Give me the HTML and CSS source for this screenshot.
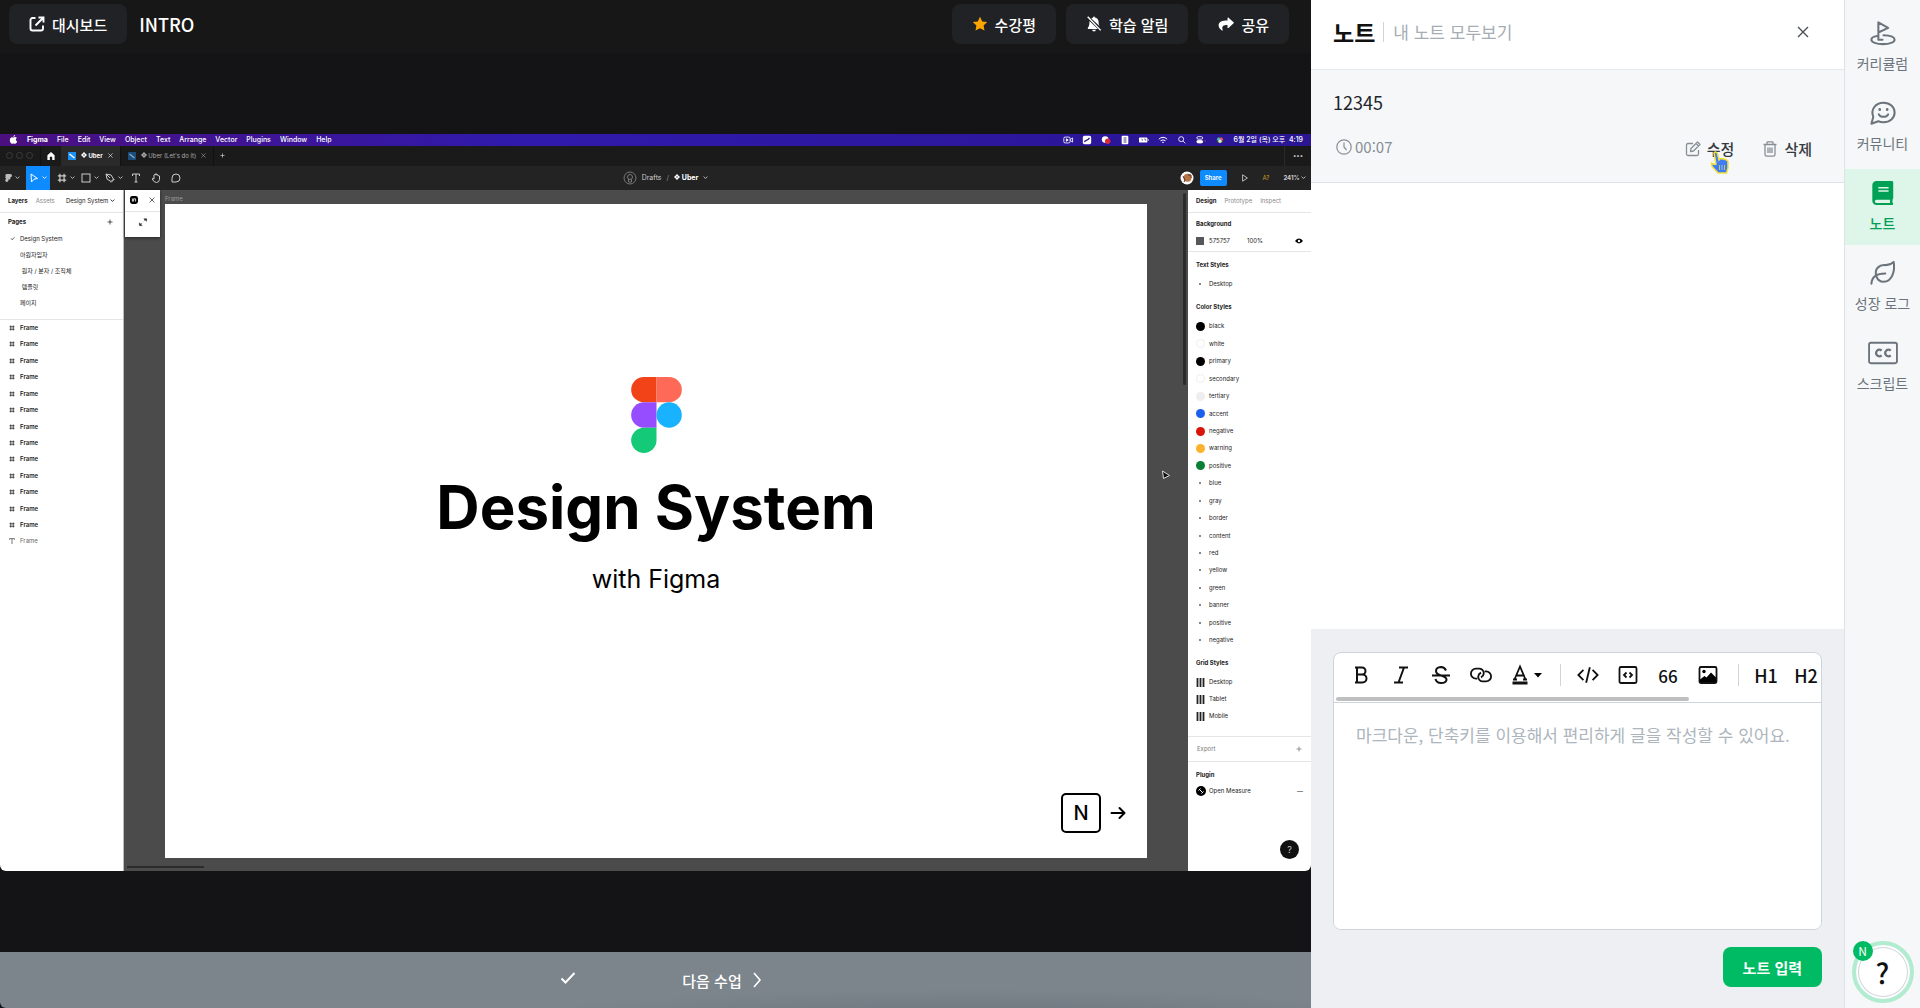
FILE: index.html
```html
<!DOCTYPE html>
<html lang="ko">
<head>
  <meta charset="UTF-8">
  <meta name="viewport" content="width=device-width, initial-scale=1.0">
  <title>INTRO - 노트</title>
  <link rel="stylesheet" href="styles.css">
</head>
<body>
  <svg class="sprite" aria-hidden="true">
    <symbol id="i-chev" viewBox="0 0 8 8"><path d="M1 2.5l3 3 3-3" fill="none" stroke="currentColor" stroke-width="1.4"/></symbol>
    <symbol id="i-grid" viewBox="0 0 12 12"><path d="M3.5 1v10M8.5 1v10M1 3.500h10M1 8.500h10" fill="none" stroke="currentColor" stroke-width="1.500"/></symbol>
    <symbol id="i-close" viewBox="0 0 12 12"><path d="M1 1l10 10M11 1L1 11" fill="none" stroke="currentColor" stroke-width="1.400"/></symbol>
    <symbol id="i-plus" viewBox="0 0 12 12"><path d="M6 1v10M1 6h10" fill="none" stroke="currentColor" stroke-width="1.500"/></symbol>
    <symbol id="i-diamond" viewBox="0 0 12 12"><path d="M6 0l6 6-6 6-6-6z" fill="currentColor"/><path d="M3 3l6 6M9 3L3 9" stroke="#2a2a2a" stroke-width=".8"/></symbol>
    <symbol id="i-cols" viewBox="0 0 9 9"><path d="M1.500 0v9M4.500 0v9M7.500 0v9" fill="none" stroke="currentColor" stroke-width="1.800"/></symbol>
  </svg>

  <div class="app">
    <main class="player">
      <header class="player-header">
        <button class="dark-btn" type="button">
          <svg class="icon-16" viewBox="0 0 16 16" fill="none" stroke="currentColor" stroke-width="1.9"><path d="M6.500 2H3.500A2 2 0 0 0 1.500 4v8.500a2 2 0 0 0 2 2H12a2 2 0 0 0 2-2V9.500M9.500 1.500h5v5M14 2L6.500 9.500"/></svg>
          대시보드
        </button>
        <h1 class="lesson-title">INTRO</h1>
        <div class="header-actions">
          <button class="dark-btn" type="button">
            <svg class="icon-16" viewBox="0 0 16 16" fill="#ffa500"><path d="M8 .8l2.200 4.600 5 .7-3.600 3.500.9 5L8 12.200l-4.500 2.400.9-5L.8 6.100l5-.7z"/></svg>
            수강평
          </button>
          <button class="dark-btn" type="button">
            <svg class="icon-16" viewBox="0 0 16 16" fill="currentColor"><path d="M1.200 1.200l1-.9 13 13.600-1 .9zM8 .6c.6 0 .9.400.9.900 2.200.5 3.700 2.200 3.700 4.600 0 1.900.3 2.900.9 3.800L5.300 2.500c.5-.5 1.100-.8 1.800-1 0-.5.3-.9.900-.9zM3.500 5l8.300 8H2.500c-.7 0-1-.8-.6-1.300C2.900 10.500 3.400 9.300 3.500 5zM6.200 13.800h3.600c0 1-.8 1.700-1.800 1.700s-1.800-.7-1.800-1.700z"/></svg>
            학습 알림
          </button>
          <button class="dark-btn" type="button">
            <svg class="icon-16" viewBox="0 0 16 16" fill="currentColor"><path d="M9.500 2.200c0-.6.600-.9 1-.5l5.100 4.600c.3.300.3.700 0 1l-5.100 4.600c-.4.400-1 .1-1-.5V9c-4.300 0-6 1-4.800 5.100.1.500-.4.800-.8.500C2.500 13.600.6 11.900.6 9.600c0-4 3.500-5 8.900-5.100z"/></svg>
            공유
          </button>
        </div>
      </header>

      <div class="stage">
        <section class="video" aria-label="강의 영상">
          <div class="mac-bar">
            <svg class="icon-9" viewBox="0 0 12 14" fill="#fff"><path d="M8.500 0c.1 1.500-1.200 3-2.600 3C5.700 1.500 7 .1 8.500 0zM6 4c.6 0 1.400-.7 2.600-.7 1 0 2 .5 2.600 1.400-2.300 1.400-1.900 4.500.5 5.400C11 12 10 13.700 8.700 13.700c-1 0-1.300-.6-2.500-.6s-1.600.6-2.500.6C2.200 13.700.3 10.700.3 8 .3 5 2 3.400 3.800 3.400 4.800 3.400 5.500 4 6 4z"/></svg>
            <b>Figma</b><span>File</span><span>Edit</span><span>View</span><span>Object</span><span>Text</span><span>Arrange</span><span>Vector</span><span>Plugins</span><span>Window</span><span>Help</span>
            <div class="mac-status">
              <svg class="icon-10" viewBox="0 0 12 10" fill="none" stroke="#fff"><rect x="1" y="1.500" width="7.500" height="7" rx="1.500"/><path d="M8.500 4.500l3-2v5l-3-2"/><path d="M4 3.500v3l2.300-1.500z" fill="#fff"/></svg>
              <svg class="icon-10" viewBox="0 0 12 10"><rect x="1" y="0" width="10" height="10" rx="2" fill="#fff"/><path d="M3 7.500C4 4 6 7 9 2.500" stroke="#231489" stroke-width="1.500" fill="none"/></svg>
              <svg class="icon-10" viewBox="0 0 12 10"><circle cx="5" cy="4.500" r="4" fill="#fff"/><circle cx="8" cy="6.500" r="3.200" fill="#d92b3a"/></svg>
              <svg class="icon-10" viewBox="0 0 12 10"><rect x="2" y="0" width="8" height="10" rx="1" fill="#fff"/><path d="M4 2.500h4M4 5h4M4 7.500h4M6 2v6" stroke="#6f62b0" fill="none"/></svg>
              <svg class="icon-10" viewBox="0 0 12 10"><rect x="0" y="2" width="10" height="6" rx="1" fill="#fff"/><path d="M3 4h1v2M6 4h2v2" stroke="#6f62b0" fill="none"/><path d="M11 4v2" stroke="#fff"/></svg>
              <svg class="icon-10" viewBox="0 0 12 10" fill="none" stroke="#fff" stroke-width="1.200"><path d="M1 4q5-4.500 10 0M3 6q3-2.500 6 0M5 8q1-1 2 0"/></svg>
              <svg class="icon-10" viewBox="0 0 12 10" fill="none" stroke="#fff"><circle cx="5" cy="4" r="3"/><path d="M7.300 6.300L10 9"/></svg>
              <svg class="icon-10" viewBox="0 0 12 10" fill="none" stroke="#fff"><rect x="1" y="1" width="7" height="3" rx="1.500"/><rect x="1" y="5.500" width="7" height="3" rx="1.500" fill="#fff"/><circle cx="11" cy="6" r=".7" fill="#f54" stroke="none"/></svg>
              <svg class="icon-10" viewBox="0 0 12 10"><circle cx="6" cy="5" r="4" fill="#443"/><circle cx="4.500" cy="4" r="2" fill="#3bb8d8"/><circle cx="7.500" cy="4" r="2" fill="#e8507a"/><circle cx="6" cy="6.500" r="2" fill="#c9f0dc"/></svg>
              <span>6월 2일 (목) 오후&nbsp; 4:19</span>
            </div>
          </div>

          <div class="tab-bar">
            <div class="lights"><i></i><i></i><i></i></div>
            <div class="home-tab">
              <svg class="icon-8" viewBox="0 0 10 10" fill="#fff"><path d="M5 0l4.500 4v6H6.500V6h-3v4H.500V4z"/></svg>
            </div>
            <div class="file-tab active">
              <svg class="icon-8" viewBox="0 0 8 8"><rect width="8" height="8" fill="#1c8ff2"/><path d="M1.500 2L6.500 6" stroke="#fff" stroke-width="1.500"/></svg>
              <b><svg class="icon-6"><use href="#i-diamond"/></svg> Uber</b>
              <svg class="icon-5"><use href="#i-close"/></svg>
            </div>
            <div class="file-tab">
              <svg class="icon-8" viewBox="0 0 8 8"><rect width="8" height="8" fill="#1b4d7c"/><path d="M1.500 2L6.500 6" stroke="#8ab" stroke-width="1.500"/></svg>
              <span><svg class="icon-6"><use href="#i-diamond"/></svg> Uber (Let's do it)</span>
              <svg class="icon-5"><use href="#i-close"/></svg>
            </div>
            <div class="new-tab"><svg class="icon-5"><use href="#i-plus"/></svg></div>
            <div class="tab-more">•••</div>
          </div>

          <div class="tool-bar">
            <div class="tools">
              <div class="tool"><svg class="icon-8" viewBox="0 0 8 10" fill="#bbb"><path d="M2.500 0H7a2 2 0 0 1 0 4v2a1.500 1.500 0 0 1-2.500.5V8a2 2 0 1 1-2.500-2A2 2 0 0 1 1 3 2 2 0 0 1 2.500 0z"/></svg><svg class="icon-5"><use href="#i-chev"/></svg></div>
              <div class="tool on"><svg class="icon-10" viewBox="0 0 10 10" fill="none" stroke="#fff"><path d="M2 1l6.500 4.500-3.500.7L2.500 9z"/></svg><svg class="icon-5"><use href="#i-chev"/></svg></div>
              <div class="tool"><svg class="icon-10"><use href="#i-grid"/></svg><svg class="icon-5"><use href="#i-chev"/></svg></div>
              <div class="tool"><svg class="icon-10" viewBox="0 0 10 10" fill="none" stroke="currentColor"><rect x="1" y="1" width="8" height="8"/></svg><svg class="icon-5"><use href="#i-chev"/></svg></div>
              <div class="tool"><svg class="icon-10" viewBox="0 0 10 10" fill="none" stroke="currentColor"><path d="M1 1l5 1 2.500 4L6 8.500 2 6zM1 1l4 4M6 9.500L9.500 6"/></svg><svg class="icon-5"><use href="#i-chev"/></svg></div>
              <div class="tool solo"><svg class="icon-10" viewBox="0 0 10 10" fill="none" stroke="currentColor"><path d="M1.500 3V1h7v2M5 1v8M3.500 9h3"/></svg></div>
              <div class="tool solo"><svg class="icon-10" viewBox="0 0 10 10" fill="none" stroke="currentColor"><path d="M3 6V2q.7-.9 1.300 0V1q.7-.9 1.400 0v1q.7-.8 1.300 0v1q.8-.7 1.500 0v3.500Q8 9.500 5.500 9.500T1.200 6Q1.500 4.500 3 6z"/></svg></div>
              <div class="tool solo"><svg class="icon-10" viewBox="0 0 10 10" fill="none" stroke="currentColor"><path d="M1 9V5a4 4 0 1 1 4 4z"/></svg></div>
            </div>
            <div class="file-name">
              <svg class="icon-14" viewBox="0 0 14 14" fill="none" stroke="#777"><circle cx="7" cy="7" r="6"/><circle cx="7" cy="6" r="2.500"/><path d="M5.500 8v3h3V8"/></svg>
              <span>Drafts</span><span class="dim">/</span>
              <b><svg class="icon-6"><use href="#i-diamond"/></svg> Uber</b>
              <svg class="icon-5"><use href="#i-chev"/></svg>
            </div>
            <div class="tool-right">
              <svg class="icon-14" viewBox="0 0 14 14"><circle cx="7" cy="7" r="6.500" fill="#fff"/><circle cx="7.500" cy="6.800" r="4" fill="#b87444"/><path d="M3 5l2 4-1 2M8 4h3v3" stroke="#553528" fill="none"/></svg>
              <span class="share">Share</span>
              <svg class="icon-8" viewBox="0 0 10 10" fill="none" stroke="#ddd"><path d="M2 1l6 4-6 4z"/></svg>
              <span class="missing-font">A?</span>
              <b>241% <svg class="icon-5"><use href="#i-chev"/></svg></b>
            </div>
          </div>

          <div class="workspace">
            <aside class="layers">
              <div class="side-tabs"><b>Layers</b><span class="dim">Assets</span><span class="page-pick">Design System <svg class="icon-5"><use href="#i-chev"/></svg></span></div>
              <div class="pages-title"><b>Pages</b><svg class="icon-6"><use href="#i-plus"/></svg></div>
              <ul class="pages">
                <li class="current">Design System</li>
                <li>아원자입자</li>
                <li>&nbsp;원자 / 분자 / 조직체</li>
                <li>&nbsp;템플릿</li>
                <li>페이지</li>
              </ul>
              <ul class="frames">
                <li><svg class="icon-6"><use href="#i-grid"/></svg>Frame</li>
                <li><svg class="icon-6"><use href="#i-grid"/></svg>Frame</li>
                <li><svg class="icon-6"><use href="#i-grid"/></svg>Frame</li>
                <li><svg class="icon-6"><use href="#i-grid"/></svg>Frame</li>
                <li><svg class="icon-6"><use href="#i-grid"/></svg>Frame</li>
                <li><svg class="icon-6"><use href="#i-grid"/></svg>Frame</li>
                <li><svg class="icon-6"><use href="#i-grid"/></svg>Frame</li>
                <li><svg class="icon-6"><use href="#i-grid"/></svg>Frame</li>
                <li><svg class="icon-6"><use href="#i-grid"/></svg>Frame</li>
                <li><svg class="icon-6"><use href="#i-grid"/></svg>Frame</li>
                <li><svg class="icon-6"><use href="#i-grid"/></svg>Frame</li>
                <li><svg class="icon-6"><use href="#i-grid"/></svg>Frame</li>
                <li><svg class="icon-6"><use href="#i-grid"/></svg>Frame</li>
                <li class="text-layer"><svg class="icon-6" viewBox="0 0 10 10" fill="none" stroke="currentColor" stroke-width="1.500"><path d="M1 3V1h8v2M5 1v9"/></svg>Frame</li>
              </ul>
            </aside>

            <div class="canvas">
              <div class="plugin-popup">
                <div class="popup-top">
                  <svg class="icon-8" viewBox="0 0 10 10"><rect width="10" height="10" rx="3"/><path d="M3 3v3.500h1.500V3.500H7V7" stroke="#fff" fill="none"/></svg>
                  <svg class="icon-6"><use href="#i-close"/></svg>
                </div>
                <svg class="icon-8" viewBox="0 0 10 10" fill="#222"><path d="M6 1h3.500v3zM.500 6v3.500H4zM6 4l1.500-1.500M4 6L2.500 7.500" stroke="#222" stroke-width=".6"/></svg>
              </div>
              <div class="frame-label">Frame</div>
              <div class="slide">
                <div class="slide-hero">
                  <svg class="figma-logo" viewBox="0 0 52 78">
                    <path d="M13 0h13v26H13a13 13 0 0 1 0-26z" fill="#f24318"/>
                    <path d="M26 0h13a13 13 0 0 1 0 26H26z" fill="#ff6a58"/>
                    <path d="M13 26h13v26H13a13 13 0 0 1 0-26z" fill="#964dff"/>
                    <circle cx="39" cy="39" r="13" fill="#18b2ff"/>
                    <path d="M13 52h13v13a13 13 0 1 1-13-13z" fill="#14c978"/>
                  </svg>
                  <h2 class="slide-title">Design System</h2>
                  <p class="slide-sub">with Figma</p>
                </div>
                <div class="slide-next">
                  <kbd>N</kbd>
                  <svg class="icon-16" viewBox="0 0 16 16" fill="none" stroke="#000" stroke-width="2" stroke-linecap="round" stroke-linejoin="round"><path d="M1.500 8h13M9.500 3l5 5-5 5"/></svg>
                </div>
              </div>
              <div class="scroll-v"></div>
              <div class="scroll-h"></div>
              <svg class="canvas-cursor" viewBox="0 0 10 10"><path d="M1.500 1l7 4.500-6 3z" fill="#111" stroke="#ddd"/></svg>
            </div>

            <aside class="props">
              <div class="side-tabs"><b>Design</b><span class="dim">Prototype</span><span class="dim">Inspect</span></div>
              <div class="prop-group background">
                <h3>Background</h3>
                <div class="fill-row"><i class="swatch"></i><span>575757</span><span class="opacity">100%</span><svg class="icon-8" viewBox="0 0 10 10"><path d="M0 5q5-6 10 0-5 6-10 0z"/><circle cx="5" cy="5" r="1.500" fill="#fff"/></svg></div>
              </div>
              <div class="prop-group">
                <h3>Text Styles</h3>
                <ul class="styles"><li><i class="group"></i>Desktop</li></ul>
                <h3>Color Styles</h3>
                <ul class="styles colors">
                  <li><i class="dot black"></i>black</li>
                  <li><i class="dot white"></i>white</li>
                  <li><i class="dot black"></i>primary</li>
                  <li><i class="dot white"></i>secondary</li>
                  <li><i class="dot tertiary"></i>tertiary</li>
                  <li><i class="dot accent"></i>accent</li>
                  <li><i class="dot negative"></i>negative</li>
                  <li><i class="dot warning"></i>warning</li>
                  <li><i class="dot positive"></i>positive</li>
                  <li><i class="group"></i>blue</li>
                  <li><i class="group"></i>gray</li>
                  <li><i class="group"></i>border</li>
                  <li><i class="group"></i>content</li>
                  <li><i class="group"></i>red</li>
                  <li><i class="group"></i>yellow</li>
                  <li><i class="group"></i>green</li>
                  <li><i class="group"></i>banner</li>
                  <li><i class="group"></i>positive</li>
                  <li><i class="group"></i>negative</li>
                </ul>
                <h3>Grid Styles</h3>
                <ul class="styles grids">
                  <li><svg class="icon-9"><use href="#i-cols"/></svg>Desktop</li>
                  <li><svg class="icon-9"><use href="#i-cols"/></svg>Tablet</li>
                  <li><svg class="icon-9"><use href="#i-cols"/></svg>Mobile</li>
                </ul>
              </div>
              <div class="export-row"><span>Export</span><svg class="icon-6"><use href="#i-plus"/></svg></div>
              <div class="prop-group">
                <h3>Plugin</h3>
                <div class="plugin-row"><svg class="icon-10" viewBox="0 0 10 10"><circle cx="5" cy="5" r="5"/><path d="M3 3l4 4M2.500 4.500l2-2M5.500 7.500l2-2" stroke="#fff"/></svg>Open Measure<span>—</span></div>
              </div>
              <div class="figma-help">?</div>
            </aside>
          </div>
        </section>
      </div>

      <footer class="player-footer">
        <button class="check-btn" type="button" aria-label="학습 완료">
          <svg class="icon-16" viewBox="0 0 16 16" fill="none" stroke="currentColor" stroke-width="2"><path d="M1.500 8.500L5.500 12.500 14.500 3"/></svg>
        </button>
        <button class="next-btn" type="button">다음 수업
          <svg class="icon-16" viewBox="0 0 16 16" fill="none" stroke="currentColor" stroke-width="1.600"><path d="M5 1l6 7-6 7"/></svg>
        </button>
      </footer>
    </main>

    <section class="notes">
      <header class="notes-header">
        <h2>노트</h2>
        <a href="#">내 노트 모두보기</a>
        <button class="close-btn" type="button" aria-label="닫기"><svg class="icon-12"><use href="#i-close"/></svg></button>
      </header>
      <article class="note">
        <p>12345</p>
        <div class="note-meta">
          <span class="note-time">
            <svg class="icon-16" viewBox="0 0 16 16" fill="none" stroke="currentColor" stroke-width="1.200"><circle cx="8" cy="8" r="7.200"/><path d="M8 3.500V8l2.500 3"/></svg>00:07
          </span>
          <button class="note-btn" type="button">
            <svg class="icon-16" viewBox="0 0 16 16" fill="none" stroke="currentColor" stroke-width="1.300" stroke-linejoin="round"><path d="M8 2.500H3A1.500 1.500 0 0 0 1.500 4v9A1.500 1.500 0 0 0 3 14.500h9a1.500 1.500 0 0 0 1.500-1.500V9M5.500 10.500l.5-3L12.500 1l2.500 2.500L8.500 10zM11 2.500L13.500 5"/></svg>
            수정
            <svg class="hand" viewBox="0 0 20 24"><path d="M4 2q2-2 3.500.5L9 9l1-1.500 2 .5 1-.5 1.700 1 1.200-.2L18 10.500V17l-1.500 5H8L2 15.500 1.500 12l3 1.500L6 13z" fill="#3f7cf5" stroke="#f3e23c" stroke-width="1.500"/><path d="M9.500 14v5M12 14v5M14.500 14v5" stroke="#b9c77a" fill="none"/></svg>
          </button>
          <button class="note-btn" type="button">
            <svg class="icon-16" viewBox="0 0 16 16" fill="none" stroke="currentColor" stroke-width="1.300"><path d="M1.500 3.500h13M5 3.500V1.500q0-.7.7-.7h4.600q.7 0 .7.700v2M3 3.500V13.500q0 1.700 1.700 1.700h6.600q1.700 0 1.700-1.700V3.500M6 6.500v5.500M8 6.500v5.500M10 6.500v5.500"/></svg>
            삭제
          </button>
        </div>
      </article>

      <form class="composer">
        <div class="editor">
          <div class="editor-bar">
            <button type="button" aria-label="굵게"><svg class="icon-20" viewBox="0 0 20 20" fill="none" stroke="currentColor" stroke-width="2"><path d="M4 2.500h7a3.500 3.500 0 0 1 0 7H6M6 2.500v15M4 17.500h7.500a4 4 0 0 0 0-8"/></svg></button>
            <button type="button" aria-label="기울임"><svg class="icon-20" viewBox="0 0 20 20" fill="none" stroke="currentColor" stroke-width="2"><path d="M8 2.500h9M3 17.500h9M13 2.500L7.500 17.500"/></svg></button>
            <button type="button" aria-label="취소선"><svg class="icon-20" viewBox="0 0 20 20" fill="none" stroke="currentColor" stroke-width="2"><path d="M1 10.500h18M15 5.500Q13.500 2 10 2 5 2.300 5 6q0 3 5 4.500 5.500 1.500 5.500 4.300Q15 18 10 18q-4.500 0-5.500-4"/></svg></button>
            <button type="button" aria-label="링크"><svg class="icon-22" viewBox="0 0 24 24" fill="none" stroke="currentColor" stroke-width="2"><path d="M8 16H6.500a5 5 0 0 1 0-11h4a5 5 0 0 1 4.500 5.500 5 5 0 0 1-3 4M16 8h1.500a5 5 0 0 1 0 11h-4A5 5 0 0 1 9 13.500a5 5 0 0 1 3-4"/></svg></button>
            <button class="color-btn" type="button" aria-label="글자 색"><svg class="icon-20" viewBox="0 0 20 20" fill="none" stroke="currentColor" stroke-width="1.800"><path d="M4.500 14.500L10 1.500l5.500 13M6.500 10.500h7M3 14.500h4M13 14.500h4"/><path d="M2.500 18h15" stroke-width="3"/></svg><svg class="icon-8" viewBox="0 0 8 8"><path d="M0 2h8L4 6.500z"/></svg></button>
            <span class="bar-line"></span>
            <button type="button" aria-label="코드"><svg class="icon-22" viewBox="0 0 24 24" fill="none" stroke="currentColor" stroke-width="2"><path d="M7 6.500L1.500 12 7 17.500M17 6.500l5.500 5.500-5.500 5.500M14 3.500l-4 17"/></svg></button>
            <button type="button" aria-label="코드 블록"><svg class="icon-20" viewBox="0 0 20 20" fill="none" stroke="currentColor" stroke-width="1.800"><rect x="1.500" y="2" width="17" height="16" rx="1.500"/><path d="M8.500 7.500L6 10l2.500 2.500M11.500 7.500L14 10l-2.500 2.500"/></svg></button>
            <button type="button" aria-label="인용">66</button>
            <button type="button" aria-label="이미지"><svg class="icon-20" viewBox="0 0 20 20"><rect x="1.500" y="2" width="17" height="16" rx="1.500" fill="none" stroke="currentColor" stroke-width="1.800"/><circle cx="6" cy="6.500" r="1.700"/><path d="M2 17v-2.500L6.500 11l2 1.500L13 7.500l5 5V17z"/></svg></button>
            <span class="bar-line"></span>
            <button class="heading-btn" type="button">H1</button>
            <button class="heading-btn" type="button">H2</button>
          </div>
          <div class="bar-scroll"><i></i></div>
          <textarea aria-label="노트 내용" placeholder="마크다운, 단축키를 이용해서 편리하게 글을 작성할 수 있어요."></textarea>
        </div>
        <button class="submit-btn" type="button">노트 입력</button>
      </form>
    </section>

    <nav class="rail">
      <a href="#">
        <svg class="icon-28" viewBox="0 0 28 28" fill="none" stroke="currentColor" stroke-width="2.200" stroke-linejoin="round" stroke-linecap="round"><path d="M9 21V2.500L19.500 8.500 9 13.500M9 17C4.500 17.500 1.500 19 1.500 21.200c0 2.700 5.500 4.800 12.500 4.800s12.500-2 12.500-4.800c0-2.700-5-4.500-12-4.700M9 21.200h4.500"/></svg>
        커리큘럼
      </a>
      <a href="#">
        <svg class="icon-28" viewBox="0 0 28 28" fill="none" stroke="currentColor" stroke-width="2.200" stroke-linejoin="round" stroke-linecap="round"><path d="M1.500 25.500l2-7.200C.5 10 6 3 14.500 3c7 0 12 4.500 12 10.500S21.500 24 14.500 24c-2 0-4-.4-5.500-1.200zM9.500 15.500c2 3.500 8 3.500 10 0"/><path d="M10.500 10v.5M18.500 10v.5" stroke-width="2.800"/></svg>
        커뮤니티
      </a>
      <a class="active" href="#">
        <svg class="icon-28" viewBox="0 0 28 28"><path d="M7 1h16.500A1.500 1.500 0 0 1 25 2.500v17q0 1-.8 1.400v3.700q.8.200.8 1.100 0 1.300-1.300 1.300H7a4.500 4.500 0 0 1-4.500-4.500v-17A4.500 4.500 0 0 1 7 1z" fill="currentColor"/><path d="M7 21.200h14.500v3.600H7a1.800 1.800 0 0 1 0-3.600zM9 7.500h11v1.700H9zM9 11h11v1.700H9z" fill="#def5e9"/></svg>
        노트
      </a>
      <a href="#">
        <svg class="icon-28" viewBox="0 0 28 28" fill="none" stroke="currentColor" stroke-width="2.200" stroke-linejoin="round" stroke-linecap="round"><path d="M1.500 25.500C2 18 6.500 14.500 16.500 14.500M7 18C4 9.500 10 5 17 5.500q5 0 8.500-3.500c1.500 9-1 21-11 21.500Q9 23.500 7 18z"/></svg>
        성장 로그
      </a>
      <a href="#">
        <svg class="icon-28" viewBox="0 0 28 28" fill="none" stroke="currentColor" stroke-width="2"><rect x="-1" y="3" width="30" height="22" rx="2"/><path d="M12.500 11.500a3.500 3.500 0 1 0 0 5M22.300 11.500a3.500 3.500 0 1 0 0 5" stroke-width="2.500"/></svg>
        스크립트
      </a>
      <button class="help-btn" type="button" aria-label="도움말">?<span class="help-badge">N</span></button>
    </nav>
  </div>
</body>
</html>
```
FILE: styles.css
```css
* {
  box-sizing: border-box;
}
body {
  margin: 0;
  font-family: "Noto Sans CJK KR", "Noto Sans", sans-serif;
  background: #141416;
  color: #212529;
}
h1, h2, h3, p, ul {
  margin: 0;
  padding: 0;
}
ul {
  list-style: none;
}
button {
  font-family: inherit;
  border: 0;
  background: none;
  padding: 0;
  color: inherit;
}
a {
  text-decoration: none;
  color: inherit;
}
svg {
  flex: none;
  overflow: visible;
}
.sprite {
  display: none;
}
.icon-5 { width: 5px; height: 5px; }
.icon-6 { width: 6px; height: 6px; }
.icon-8 { width: 8px; height: 8px; }
.icon-9 { width: 9px; height: 9px; }
.icon-10 { width: 10px; height: 10px; }
.icon-12 { width: 12px; height: 12px; }
.icon-14 { width: 14px; height: 14px; }
.icon-16 { width: 16px; height: 16px; }
.icon-20 { width: 20px; height: 20px; }
.icon-22 { width: 22px; height: 22px; }
.icon-28 { width: 26px; height: 28px; }

.app {
  display: flex;
  height: 100vh;
}

/* player */
.player {
  flex: 1;
  min-width: 0;
  display: flex;
  flex-direction: column;
}
.player-header {
  display: flex;
  align-items: center;
  gap: 12px;
  padding: 4px 22px 9px 9px;
  background: #171717;
}
.header-actions {
  display: flex;
  gap: 10px;
  margin-left: auto;
}
.dark-btn {
  display: flex;
  align-items: center;
  gap: 7px;
  height: 40px;
  padding: 0 20px;
  border-radius: 8px;
  background: #212226;
  color: #fff;
  font-size: 15px;
  font-weight: 500;
}
.lesson-title {
  color: #fff;
  font-size: 18px;
  font-weight: 500;
  line-height: 24px;
}
.stage {
  flex: 1;
  min-height: 0;
  display: flex;
  align-items: center;
}
.player-footer {
  display: flex;
  justify-content: center;
  align-items: center;
  gap: 80px;
  height: 56px;
  background: radial-gradient(ellipse at 74% 130%, #6a737b, #7c848c 35%);
  border-bottom-left-radius: 6px;
  color: #fff;
}
.check-btn {
  width: 56px;
  height: 40px;
}
.next-btn {
  display: flex;
  align-items: center;
  gap: 7px;
  height: 40px;
  padding: 0 6px;
  font-size: 15px;
  font-weight: 500;
}

/* figma screen inside the video */
.video {
  width: 100%;
  aspect-ratio: 16 / 9;
  display: flex;
  flex-direction: column;
  overflow: hidden;
  border-radius: 0 0 6px 6px;
  background: #1a1a1a;
  font-family: Inter, "Noto Sans CJK KR", sans-serif;
  font-size: 6px;
  line-height: 10px;
  color: #222;
}
.mac-bar {
  display: flex;
  align-items: center;
  gap: 9px;
  height: 12px;
  padding: 0 8px 0 9px;
  background: linear-gradient(90deg, #4b0f80, #2f1aac 40%, #2a1593);
  color: #fff;
  font-size: 7px;
  font-weight: 500;
}
.mac-status {
  display: flex;
  align-items: center;
  gap: 9px;
  margin-left: auto;
}
.tab-bar {
  display: flex;
  height: 20px;
  color: #ddd;
}
.lights {
  display: flex;
  align-items: center;
  gap: 3px;
  width: 41px;
  padding-left: 6px;
  border-right: 1px solid #111;
}
.lights i {
  width: 7px;
  height: 7px;
  border: 1px solid #3c3c3c;
  border-radius: 50%;
}
.home-tab {
  display: flex;
  align-items: center;
  justify-content: center;
  width: 20px;
}
.file-tab {
  display: flex;
  align-items: center;
  gap: 5px;
  padding: 0 7px;
  border-right: 1px solid #111;
  color: #aaa;
}
.file-tab.active {
  background: #2a2a2a;
  color: #fff;
}
.new-tab {
  display: flex;
  align-items: center;
  padding-left: 6px;
}
.tab-more {
  margin-left: auto;
  padding: 5px 8px;
  border-left: 1px solid #2a2a2a;
}
.tool-bar {
  display: grid;
  grid-template-columns: 1fr auto 1fr;
  height: 24px;
  background: #232323;
  color: #ccc;
}
.tools,
.tool,
.file-name,
.tool-right {
  display: flex;
  align-items: center;
}
.tool {
  gap: 3px;
  width: 24px;
  height: 100%;
  justify-content: center;
}
.tool.on {
  background: #0d8bff;
  color: #fff;
  margin-left: 2px;
  margin-right: 4px;
}
.tool.solo {
  width: 20px;
}
.file-name {
  gap: 5px;
  padding-left: 20px;
  font-size: 7px;
}
.file-name b {
  color: #fff;
}
.dim {
  color: #8a8a8a;
}
.tool-right {
  gap: 14px;
  justify-content: flex-end;
  padding-right: 5px;
}
.tool-right .icon-14 {
  margin-right: -8px;
}
.tool-right b {
  white-space: nowrap;
}
.share {
  padding: 3px 5px;
  border-radius: 2px;
  background: #0d8bff;
  color: #fff;
  font-weight: 600;
}
.missing-font {
  color: #c99b2c;
}
.workspace {
  flex: 1;
  min-height: 0;
  display: flex;
}
.layers {
  width: 124px;
  background: #fff;
  border-right: 1px solid #bbb;
}
.side-tabs {
  display: flex;
  align-items: center;
  gap: 8px;
  height: 23px;
  padding: 0 8px;
  border-bottom: 1px solid #e5e5e5;
  white-space: nowrap;
}
.page-pick {
  margin-left: auto;
}
.pages-title {
  display: flex;
  align-items: center;
  justify-content: space-between;
  height: 18px;
  padding: 0 10px 0 8px;
}
.pages {
  padding-bottom: 8px;
  border-bottom: 1px solid #e5e5e5;
}
.pages li {
  height: 16px;
  padding: 3px 0 3px 20px;
}
.pages .current {
  padding-left: 10px;
}
.pages .current::before {
  content: "✓";
  display: inline-block;
  width: 10px;
  line-height: 8px;
}
.frames {
  display: flex;
  flex-direction: column;
  height: 230px;
}
.frames li {
  flex: 1;
  display: flex;
  align-items: center;
  gap: 5px;
  padding-left: 9px;
  font-weight: 600;
}
.frames .text-layer {
  font-weight: 400;
  color: #666;
}
.canvas {
  position: relative;
  flex: 1;
  min-width: 0;
  display: flex;
  flex-direction: column;
  padding: 4px 41px 13px;
  background: #4b4b4b;
}
.frame-label {
  color: #999;
}
.plugin-popup {
  position: absolute;
  left: 1px;
  top: 0;
  width: 35px;
  height: 47px;
  background: #fff;
  text-align: center;
  box-shadow: 0 1px 3px rgba(0, 0, 0, 0.5);
}
.popup-top {
  display: flex;
  align-items: center;
  justify-content: space-around;
  height: 22px;
  margin-bottom: 6px;
  border-bottom: 1px solid #e5e5e5;
}
.slide {
  flex: 1;
  display: flex;
  flex-direction: column;
  background: #fff;
  color: #000;
}
.slide-hero {
  flex: 1;
  display: flex;
  flex-direction: column;
  align-items: center;
  justify-content: center;
  padding-bottom: 26px;
}
.figma-logo {
  width: 51px;
  height: 76px;
}
.slide-title {
  margin-top: 16px;
  font-size: 60px;
  font-weight: 700;
  line-height: 76px;
}
.slide-sub {
  margin-top: 18px;
  font-size: 25px;
  line-height: 32px;
}
.slide-next {
  display: flex;
  align-items: center;
  align-self: flex-end;
  gap: 9px;
  padding: 0 21px 25px;
}
.slide-next kbd {
  width: 40px;
  height: 40px;
  border: 2px solid #000;
  border-radius: 5px;
  font-family: inherit;
  font-size: 20px;
  font-weight: 500;
  line-height: 36px;
  text-align: center;
}
.scroll-v {
  position: absolute;
  right: 2px;
  top: 3px;
  width: 3px;
  height: 192px;
  border-radius: 2px;
  background: #2b2b2b;
}
.scroll-h {
  position: absolute;
  left: 3px;
  bottom: 3px;
  width: 77px;
  height: 2px;
  background: #2b2b2b;
}
.canvas-cursor {
  position: absolute;
  right: 17px;
  top: 280px;
  width: 10px;
  height: 10px;
}
.props {
  position: relative;
  width: 123px;
  background: #fff;
}
.prop-group {
  padding: 6px 8px 2px;
}
.prop-group h3 {
  margin-bottom: 4px;
  font-size: 6px;
  font-weight: 700;
  line-height: 14px;
}
.background,
.export-row {
  border-bottom: 1px solid #e5e5e5;
}
.background {
  padding-top: 4px;
}
.background h3 {
  margin-bottom: 2px;
}
.fill-row {
  display: flex;
  align-items: center;
  gap: 5px;
  height: 16px;
}
.swatch {
  width: 8px;
  height: 8px;
  background: #575757;
}
.opacity {
  margin: 0 auto 0 12px;
}
.styles {
  margin-bottom: 7px;
}
.styles li {
  display: flex;
  align-items: center;
  gap: 4px;
  height: 17px;
}
.styles.colors {
  display: flex;
  flex-direction: column;
  height: 331px;
}
.styles.colors li {
  flex: 1;
}
.grids {
  margin-bottom: 9px;
}
.group {
  width: 9px;
}
.group::before {
  content: "";
  display: block;
  width: 2px;
  height: 2px;
  margin-left: 3px;
  background: #888;
}
.dot {
  width: 9px;
  height: 9px;
  border-radius: 50%;
}
.dot.black { background: #000; }
.dot.white { border: 1px solid #eee; }
.dot.tertiary { background: #eee; }
.dot.accent { background: #1c5fec; }
.dot.negative { background: #d91407; }
.dot.warning { background: #fcb22d; }
.dot.positive { background: #087f35; }
.export-row {
  display: flex;
  align-items: center;
  justify-content: space-between;
  height: 26px;
  padding: 0 9px;
  border-top: 1px solid #e5e5e5;
  color: #777;
}
.plugin-row {
  display: flex;
  align-items: center;
  gap: 3px;
}
.plugin-row span {
  margin-left: auto;
}
.figma-help {
  position: absolute;
  right: 12px;
  bottom: 12px;
  width: 19px;
  height: 19px;
  border-radius: 50%;
  background: #111;
  color: #ccc;
  font-size: 9px;
  line-height: 19px;
  text-align: center;
}

/* notes */
.notes {
  flex: none;
  width: 533px;
  display: flex;
  flex-direction: column;
  background: #fff;
}
.notes-header {
  display: flex;
  align-items: center;
  height: 69px;
  padding: 0 35px 5px 22px;
}
.notes-header h2 {
  color: #111;
  font-size: 23px;
  font-weight: 700;
  line-height: 32px;
}
.notes-header a {
  margin-left: 8px;
  padding-left: 9px;
  border-left: 1px solid #ced4da;
  color: #a6adb4;
  font-size: 17px;
  line-height: 20px;
}
.close-btn {
  display: flex;
  margin-left: auto;
  color: #495057;
}
.note {
  padding: 19px 32px 19px 22px;
  border-top: 1px solid #e6e9ec;
  border-bottom: 1px solid #dde3e8;
  background: #f6f7f9;
}
.note p {
  font-size: 18px;
  line-height: 26px;
}
.note-meta {
  display: flex;
  align-items: center;
  margin-top: 20px;
}
.note-time {
  display: flex;
  align-items: center;
  gap: 3px;
  margin: 0 auto 4px 3px;
  color: #868e96;
  font-size: 15px;
  line-height: 24px;
}
.note-btn {
  position: relative;
  display: flex;
  align-items: center;
  gap: 6px;
  margin-left: 28px;
  color: #343a40;
  font-size: 15px;
  font-weight: 500;
  line-height: 24px;
}
.note-btn .icon-16 {
  color: #868e96;
}
.hand {
  position: absolute;
  right: 4px;
  top: 14px;
  width: 20px;
  height: 24px;
}
.composer {
  display: flex;
  flex-direction: column;
  margin-top: auto;
  padding: 23px 22px 21px;
  background: #eeeff3;
}
.editor {
  display: flex;
  flex-direction: column;
  height: 278px;
  overflow: hidden;
  border: 1px solid #ced4da;
  border-radius: 8px;
  background: #fff;
}
.editor-bar {
  display: flex;
  align-items: center;
  height: 44px;
  padding-left: 7px;
  color: #111;
}
.editor-bar button {
  flex: none;
  display: flex;
  align-items: center;
  justify-content: center;
  width: 40px;
  height: 40px;
  font-size: 17px;
  font-weight: 500;
}
.editor-bar .color-btn {
  width: 49px;
  gap: 4px;
}
.editor-bar .heading-btn {
  font-size: 18px;
}
.bar-line {
  flex: none;
  width: 1px;
  height: 22px;
  margin: 0 7px 0 10px;
  background: #ced4da;
}
.bar-scroll {
  padding: 0 2px 1px;
  border-bottom: 1px solid #ced4da;
}
.bar-scroll i {
  display: block;
  width: 73%;
  height: 4px;
  border-radius: 2px;
  background: #bfbfbf;
}
textarea {
  flex: 1;
  padding: 20px 22px;
  border: 0;
  outline: 0;
  resize: none;
  font-family: inherit;
  font-size: 17px;
  line-height: 24px;
}
textarea::placeholder {
  color: #adb5bd;
}
.submit-btn {
  align-self: flex-end;
  height: 40px;
  margin-top: 17px;
  padding: 0 20px;
  border-radius: 8px;
  background: #00bb64;
  color: #fff;
  font-size: 15px;
  font-weight: 700;
}

/* right menu */
.rail {
  flex: none;
  width: 76px;
  display: flex;
  flex-direction: column;
  gap: 4px;
  padding: 9px 0 5px;
  border-left: 1px solid #dee2e6;
  background: #f6f7f9;
}
.rail a {
  display: flex;
  flex-direction: column;
  align-items: center;
  gap: 7px;
  height: 76px;
  padding-top: 10px;
  color: #6b747c;
  font-size: 14px;
  line-height: 18px;
}
.rail .active {
  background: #def5e9;
  color: #00a055;
  font-weight: 500;
}
.help-btn {
  position: relative;
  align-self: center;
  width: 62px;
  height: 62px;
  margin-top: auto;
  border: 4px solid #b2ecd0;
  border-radius: 50%;
  background: #fff;
  box-shadow: inset 0 0 0 2px #fff, inset 0 0 0 3px #ced4da;
  color: #111;
  font-size: 28px;
  font-weight: 500;
}
.help-badge {
  position: absolute;
  left: -3px;
  top: -4px;
  width: 20px;
  height: 20px;
  border-radius: 50%;
  background: #00bb64;
  color: #fff;
  font-size: 12px;
  font-weight: 400;
  line-height: 20px;
}
```
